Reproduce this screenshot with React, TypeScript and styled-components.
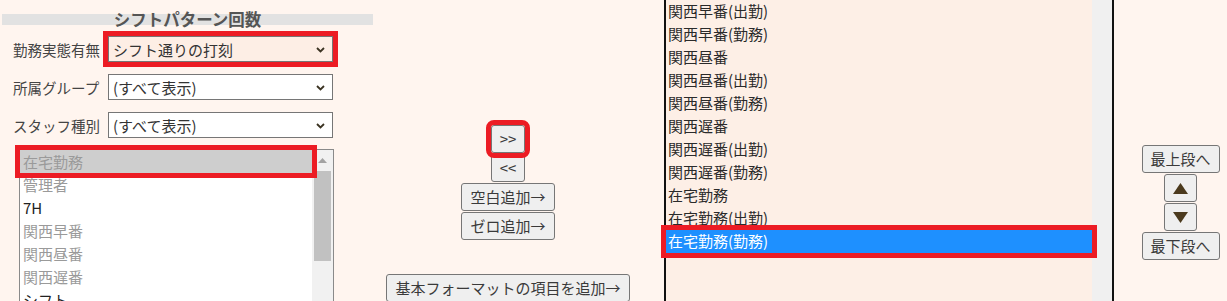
import React from "react";
import styled, { createGlobalStyle } from "styled-components";

const GlobalStyle = createGlobalStyle`
  html, body {
    margin: 0;
    padding: 0;
    background: #fff5ef;
    overflow: hidden;
  }
  body {
    font-family: "Noto Sans CJK JP", "Noto Sans", sans-serif;
    color: #333;
  }
`;

const FONT = `"Noto Sans CJK JP", "Noto Sans", sans-serif`;
const RED = "#ec1c24";

const Page = styled.div`
  display: flex;
  align-items: flex-start;
  height: 301px;
  overflow: hidden;
  font-family: ${FONT};
  font-size: 15px;
`;

const LeftCol = styled.div`
  width: 375px;
  flex: none;
  padding-top: 14px;
  display: flex;
  flex-direction: column;
`;

const TitleBar = styled.div`
  margin-left: 2px;
  width: 371px;
  height: 11px;
  background: #e2e2e2;
  display: flex;
  align-items: center;
  justify-content: center;
  overflow: visible;
`;

const TitleText = styled.span`
  font-size: 16.5px;
  font-weight: bold;
  color: #555;
  line-height: 11px;
  white-space: nowrap;
`;

const Filters = styled.div`
  display: flex;
  flex-direction: column;
  gap: 12px;
  margin-top: 11px;
  padding-left: 13px;
`;

const FilterRow = styled.label`
  display: flex;
  align-items: center;
  gap: 6px;
  height: 26px;
`;

const FilterLabel = styled.span`
  width: 89px;
  color: #444;
  font-size: 14.5px;
  white-space: nowrap;
`;

const SelectWrap = styled.div<{ $marked?: boolean }>`
  position: relative;
  width: 225px;
  height: 26px;
  outline: ${(p) => (p.$marked ? `5px solid ${RED}` : "none")};
`;

const NativeSelect = styled.select<{ $tinted?: boolean }>`
  appearance: none;
  -webkit-appearance: none;
  box-sizing: border-box;
  width: 100%;
  height: 100%;
  margin: 0;
  border: 1px solid #767676;
  border-radius: 0;
  background: ${(p) => (p.$tinted ? "#fdeee5" : "#ffffff")};
  font-family: ${FONT};
  font-size: 15px;
  color: #333;
  padding: 0 20px 0 4px;
  outline: none;
`;

const Chevron = styled.svg`
  position: absolute;
  right: 8px;
  top: 11px;
  width: 9px;
  height: 6px;
  pointer-events: none;
`;

const ListBox = styled.div`
  position: relative;
  margin-top: 11px;
  margin-left: 19px;
  width: 315px;
  height: 170px;
  box-sizing: border-box;
  border: 1px solid #8a8a8a;
  border-bottom: none;
  background: #fff;
  display: flex;
`;

const ListItems = styled.div`
  flex: 1;
  display: flex;
  flex-direction: column;
`;

const LeftItem = styled.div<{ $disabled?: boolean; $selected?: boolean; $marked?: boolean }>`
  height: 23px;
  line-height: 23px;
  padding-left: 3px;
  font-size: 15px;
  white-space: nowrap;
  color: ${(p) => (p.$disabled ? "#9a9a9a" : "#222")};
  background: ${(p) => (p.$selected ? "#cecece" : "transparent")};
  outline: ${(p) => (p.$marked ? `5px solid ${RED}` : "none")};
  position: relative;
  z-index: ${(p) => (p.$marked ? 1 : 0)};
`;

const ScrollTrack = styled.div`
  width: 21px;
  flex: none;
  background: #f1f1f1;
  display: flex;
  flex-direction: column;
  align-items: center;
`;

const ScrollArrow = styled.div`
  height: 21px;
  display: flex;
  align-items: center;
  justify-content: center;
`;

const ScrollThumb = styled.div<{ $h: number }>`
  width: 17px;
  height: ${(p) => p.$h}px;
  background: #c1c1c1;
`;

const MiddleCol = styled.div`
  width: 266px;
  flex: none;
  padding-top: 125px;
  display: flex;
  flex-direction: column;
  align-items: center;
  gap: 1px;
`;

const Btn = styled.button<{ $marked?: boolean; $gapTop?: number }>`
  box-sizing: border-box;
  height: 28px;
  padding: 0 8px;
  margin: 0;
  margin-top: ${(p) => p.$gapTop ?? 0}px;
  border: 1px solid #767676;
  border-radius: 3px;
  background: #efefef;
  font-family: ${FONT};
  font-size: 15px;
  color: #3a3a3a;
  white-space: nowrap;
  line-height: 26px;
  outline: ${(p) => (p.$marked ? `5px solid ${RED}` : "none")};
  outline-offset: 0;
  position: relative;
  z-index: ${(p) => (p.$marked ? 1 : 0)};
`;

const ArrowBtn = styled(Btn)`
  width: 33px;
  padding: 0;
  display: flex;
  align-items: center;
  justify-content: center;
`;

const RightList = styled.div`
  margin-left: 23px;
  flex: none;
  width: 450px;
  height: 301px;
  box-sizing: border-box;
  border-left: 2px solid #111;
  border-right: 2px solid #111;
  background: #fdefe6;
  display: flex;
`;

const RightItems = styled.div`
  flex: 1;
  display: flex;
  flex-direction: column;
  padding-top: 0px;
`;

const RightItem = styled.div<{ $selected?: boolean }>`
  height: 23px;
  line-height: 22px;
  padding-left: 2px;
  white-space: nowrap;
  font-size: 15px;
  color: ${(p) => (p.$selected ? "#fff" : "#2a2a2a")};
  background: ${(p) => (p.$selected ? "#1e90ff" : "transparent")};
  outline: ${(p) => (p.$selected ? `5px solid ${RED}` : "none")};
  position: relative;
  z-index: ${(p) => (p.$selected ? 1 : 0)};
`;

const RightTrack = styled.div`
  width: 20px;
  flex: none;
  background: #f0f0f0;
`;

const RightCol = styled.div`
  margin-left: 28px;
  width: 77px;
  flex: none;
  padding-top: 145px;
  display: flex;
  flex-direction: column;
  align-items: center;
  gap: 1px;
`;

const leftItems = [
  { t: "在宅勤務", d: true, s: true },
  { t: "管理者", d: true },
  { t: "7H" },
  { t: "関西早番", d: true },
  { t: "関西昼番", d: true },
  { t: "関西遅番", d: true },
  { t: "シフト" },
];

const rightItems = [
  "関西早番(出勤)",
  "関西早番(勤務)",
  "関西昼番",
  "関西昼番(出勤)",
  "関西昼番(勤務)",
  "関西遅番",
  "関西遅番(出勤)",
  "関西遅番(勤務)",
  "在宅勤務",
  "在宅勤務(出勤)",
  "在宅勤務(勤務)",
];

const ChevronIcon = () => (
  <Chevron viewBox="0 0 9 6">
    <path d="M1 1 L4.5 4.5 L8 1" fill="none" stroke="#3b3322" strokeWidth="1.8" />
  </Chevron>
);

const Triangle = ({ up }: { up?: boolean }) => (
  <svg width="15" height="11" viewBox="0 0 15 11">
    <path d={up ? "M0 11 L7.5 0 L15 11 Z" : "M0 0 L7.5 11 L15 0 Z"} fill="#4b3a1e" />
  </svg>
);

const Filter = ({
  label,
  value,
  marked,
}: {
  label: string;
  value: string;
  marked?: boolean;
}) => (
  <FilterRow>
    <FilterLabel>{label}</FilterLabel>
    <SelectWrap $marked={marked}>
      <NativeSelect $tinted={marked} defaultValue={value}>
        <option>{value}</option>
      </NativeSelect>
      <ChevronIcon />
    </SelectWrap>
  </FilterRow>
);

export default function App() {
  return (
    <>
      <GlobalStyle />
      <Page>
        <LeftCol>
          <TitleBar>
            <TitleText>シフトパターン回数</TitleText>
          </TitleBar>
          <Filters>
            <Filter label="勤務実態有無" value="シフト通りの打刻" marked />
            <Filter label="所属グループ" value="(すべて表示)" />
            <Filter label="スタッフ種別" value="(すべて表示)" />
          </Filters>
          <ListBox>
            <ListItems>
              {leftItems.map((it) => (
                <LeftItem key={it.t} $disabled={it.d} $selected={it.s} $marked={it.s}>
                  {it.t}
                </LeftItem>
              ))}
            </ListItems>
            <ScrollTrack>
              <ScrollArrow>
                <svg width="9" height="5" viewBox="0 0 9 5">
                  <path d="M0 5 L4.5 0 L9 5 Z" fill="#a3a3a3" />
                </svg>
              </ScrollArrow>
              <ScrollThumb $h={90} />
            </ScrollTrack>
          </ListBox>
        </LeftCol>

        <MiddleCol>
          <Btn $marked>&gt;&gt;</Btn>
          <Btn>&lt;&lt;</Btn>
          <Btn>空白追加→</Btn>
          <Btn>ゼロ追加→</Btn>
          <Btn $gapTop={33}>基本フォーマットの項目を追加→</Btn>
        </MiddleCol>

        <RightList>
          <RightItems>
            {rightItems.map((t, i) => (
              <RightItem key={t} $selected={i === rightItems.length - 1}>
                {t}
              </RightItem>
            ))}
          </RightItems>
          <RightTrack />
        </RightList>

        <RightCol>
          <Btn>最上段へ</Btn>
          <ArrowBtn aria-label="上へ">
            <Triangle up />
          </ArrowBtn>
          <ArrowBtn aria-label="下へ">
            <Triangle />
          </ArrowBtn>
          <Btn>最下段へ</Btn>
        </RightCol>
      </Page>
    </>
  );
}
